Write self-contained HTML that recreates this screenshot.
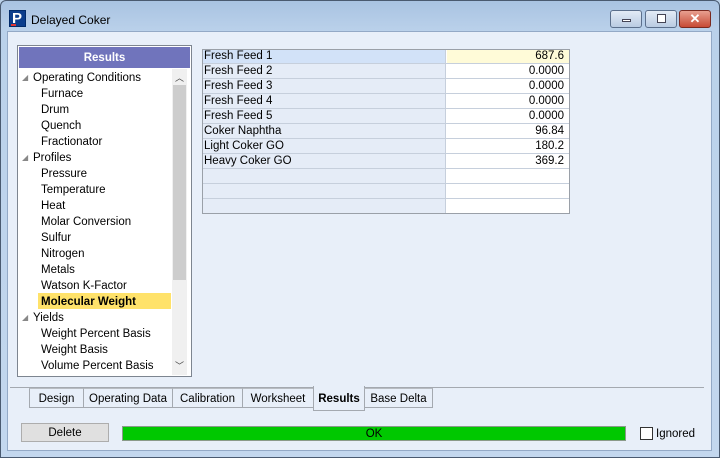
<!DOCTYPE html>
<html><head><style>
*{box-sizing:border-box;margin:0;padding:0}
body{width:720px;height:458px;position:relative;overflow:hidden;font-family:"Liberation Sans",sans-serif;font-size:11px;color:#000;background:#bcd2ea}
.abs{position:absolute}
#frame{left:0;top:0;width:720px;height:458px;border:1px solid #4a5a70;border-radius:6px 6px 0 0;background:linear-gradient(#a9c3e2,#bad1ea 30px,#c3d7ee)}
#client{left:7px;top:31px;width:705px;height:420px;background:#e8eff9;border:1px solid #93a9c6}
.btn{top:10px;height:18px;border:1px solid #5b6f8c;border-radius:3px;background:linear-gradient(#e3ebf6,#b9cbe2)}
.tree div{position:absolute;height:16px;line-height:18px;white-space:nowrap;font-size:11.5px}
.g{position:absolute;left:202px;width:368px;height:15px;border-bottom:1px solid #c6cfdc;font-size:11.5px}
.g .l{position:absolute;left:0;top:0;width:244px;height:14px;background:#e5ecf7;border-right:1px solid #c6cfdc;padding-left:2px;line-height:15px}
.g .r{position:absolute;left:245px;top:0;width:123px;height:14px;background:#fff;text-align:right;padding-right:6px;line-height:15px}
.tab{position:absolute;top:388px;height:20px;border:1px solid #a4a9b0;border-top:1px solid #b8bcc2;background:#e8eff9;line-height:21px;text-align:center;font-size:11.5px}
</style></head><body>
<div id="frame" class="abs"></div>
<div class="abs" style="left:9px;top:10px;width:17px;height:17px;background:#0b3d8c;border:1px solid #002a6a"></div>
<div class="abs" style="left:12px;top:10px;color:#fff;font-weight:bold;font-size:15px;line-height:17px">P</div>
<div class="abs" style="left:11px;top:24px;width:5px;height:2px;background:#d33"></div>
<div class="abs" style="left:31px;top:13px;font-size:12px">Delayed Coker</div>
<div class="abs btn" style="left:610px;width:32px"><div class="abs" style="left:11px;top:8px;width:9px;height:3px;background:#fff;border:1px solid #445"></div></div>
<div class="abs btn" style="left:645px;width:32px"><div class="abs" style="left:11px;top:3px;width:9px;height:9px;border:1px solid #445;background:#fff"></div></div>
<div class="abs btn" style="left:679px;width:32px;background:linear-gradient(#e8a090,#c74a35);border-color:#7a2a20;color:#fff;font-weight:bold;text-align:center;font-size:13px;line-height:16px">✕</div>
<div id="client" class="abs"></div>
<!-- tree -->
<div class="abs" style="left:17px;top:45px;width:175px;height:332px;background:#fff;border:1px solid #7d8590"></div>
<div class="abs" style="left:19px;top:47px;width:171px;height:21px;background:#7074bc;color:#fff;font-weight:bold;text-align:center;line-height:23px;font-size:11.5px">Results</div>
<div class="abs" style="left:172px;top:69px;width:15px;height:306px;background:#f0f0f0"></div>
<div class="abs" style="left:173px;top:85px;width:13px;height:195px;background:#cdcdcd"></div>
<div class="abs" style="left:175px;top:71px;font-size:9px;color:#444">︿</div>
<div class="abs" style="left:175px;top:359px;font-size:9px;color:#444">﹀</div>
<div class="abs" style="left:38px;top:293px;width:133px;height:16px;background:#ffe26a"></div>
<div class="tree">
<div style="left:22px;top:69px;color:#888;font-size:8px">◢</div><div style="left:33px;top:69px">Operating Conditions</div>
<div style="left:41px;top:85px">Furnace</div>
<div style="left:41px;top:101px">Drum</div>
<div style="left:41px;top:117px">Quench</div>
<div style="left:41px;top:133px">Fractionator</div>
<div style="left:22px;top:149px;color:#888;font-size:8px">◢</div><div style="left:33px;top:149px">Profiles</div>
<div style="left:41px;top:165px">Pressure</div>
<div style="left:41px;top:181px">Temperature</div>
<div style="left:41px;top:197px">Heat</div>
<div style="left:41px;top:213px">Molar Conversion</div>
<div style="left:41px;top:229px">Sulfur</div>
<div style="left:41px;top:245px">Nitrogen</div>
<div style="left:41px;top:261px">Metals</div>
<div style="left:41px;top:277px">Watson K-Factor</div>
<div style="left:41px;top:293px;font-weight:bold">Molecular Weight</div>
<div style="left:22px;top:309px;color:#888;font-size:8px">◢</div><div style="left:33px;top:309px">Yields</div>
<div style="left:41px;top:325px">Weight Percent Basis</div>
<div style="left:41px;top:341px">Weight Basis</div>
<div style="left:41px;top:357px">Volume Percent Basis</div>
</div>
<!-- grid -->
<div class="abs" style="left:202px;top:49px;width:368px;height:165px;border:1px solid #9aa0a8;background:#fff"></div>
<div class="g" style="top:49px"><div class="l" style="background:#d2e2f8">Fresh Feed 1</div><div class="r" style="background:#fffbd8">687.6</div></div>
<div class="g" style="top:64px"><div class="l">Fresh Feed 2</div><div class="r">0.0000</div></div>
<div class="g" style="top:79px"><div class="l">Fresh Feed 3</div><div class="r">0.0000</div></div>
<div class="g" style="top:94px"><div class="l">Fresh Feed 4</div><div class="r">0.0000</div></div>
<div class="g" style="top:109px"><div class="l">Fresh Feed 5</div><div class="r">0.0000</div></div>
<div class="g" style="top:124px"><div class="l">Coker Naphtha</div><div class="r">96.84</div></div>
<div class="g" style="top:139px"><div class="l">Light Coker GO</div><div class="r">180.2</div></div>
<div class="g" style="top:154px"><div class="l">Heavy Coker GO</div><div class="r">369.2</div></div>
<div class="g" style="top:169px"><div class="l"></div><div class="r"></div></div>
<div class="g" style="top:184px"><div class="l"></div><div class="r"></div></div>
<div class="g" style="top:199px;border:none"><div class="l"></div><div class="r"></div></div>
<div class="abs" style="left:202px;top:49px;width:368px;height:165px;border:1px solid #9aa0a8"></div>
<!-- tabs -->
<div class="abs" style="left:10px;top:387px;width:694px;height:1px;background:#a4a9b0"></div>
<div class="tab" style="left:29px;width:55px">Design</div>
<div class="tab" style="left:83px;width:90px">Operating Data</div>
<div class="tab" style="left:172px;width:71px">Calibration</div>
<div class="tab" style="left:242px;width:72px">Worksheet</div>
<div class="tab" style="left:313px;width:52px;top:386px;height:25px;border-top:none;font-weight:bold;line-height:26px">Results</div>
<div class="tab" style="left:364px;width:69px">Base Delta</div>
<!-- bottom -->
<div class="abs" style="left:21px;top:423px;width:88px;height:19px;background:#e0e0e0;border:1px solid #adadad;text-align:center;line-height:19px;font-size:11.5px">Delete</div>
<div class="abs" style="left:122px;top:426px;width:504px;height:15px;background:#00c800;border:1px solid #8a9a8a;text-align:center;line-height:15px;font-size:11.5px">OK</div>
<div class="abs" style="left:640px;top:427px;width:13px;height:13px;background:#fff;border:1px solid #333"></div>
<div class="abs" style="left:656px;top:428px;font-size:11.5px">Ignored</div>
</body></html>
